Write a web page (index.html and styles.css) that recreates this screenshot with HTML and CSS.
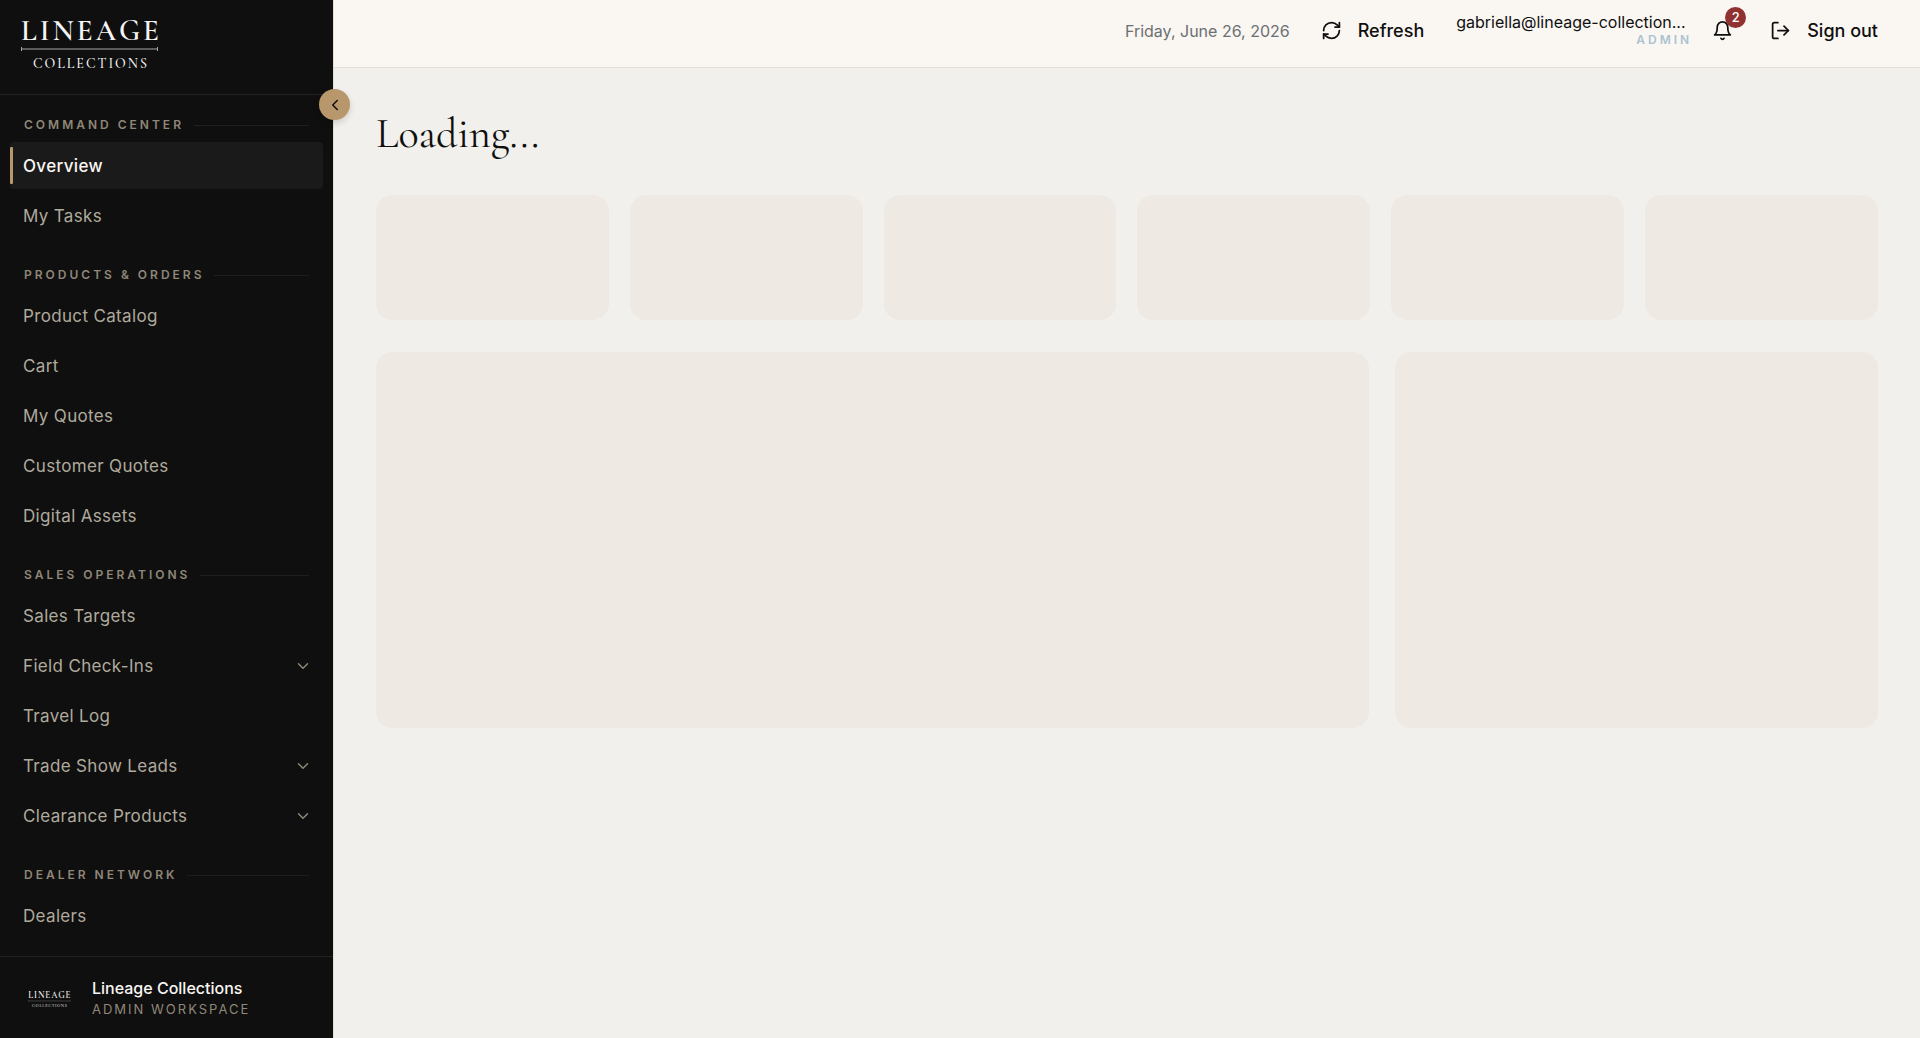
FILE: index.html
```html
<!DOCTYPE html>
<html lang="en">
<head>
    <meta charset="UTF-8">
    <meta name="viewport" content="width=device-width, initial-scale=1.0">
    <title>Lineage Collections</title>
    <link rel="stylesheet" href="styles.css">
</head>
<body>
    <div class="app">
        <aside class="sidebar">
            <div class="sidebar-header">
                <svg class="logo" viewBox="0 -12 150 68" role="img" aria-label="Lineage Collections">
                    <g id="logo">
                        <text class="logo-name" x="1" y="21">LINEAGE</text>
                        <path d="M1.5 28v4M137.5 28v4M1.5 30h136" stroke="#a8a8a8" stroke-width="1" fill="none"/>
                        <text class="logo-sub" x="13" y="49">COLLECTIONS</text>
                    </g>
                </svg>
            </div>
            <button class="collapse-button" type="button" aria-label="Collapse sidebar">
                <svg class="icon" viewBox="0 0 24 24"><path d="m15 18-6-6 6-6"/></svg>
            </button>

            <nav class="nav">
                <section class="nav-group">
                    <h2 class="nav-title">COMMAND CENTER</h2>
                    <a class="nav-item active" href="#">Overview</a>
                    <a class="nav-item" href="#">My Tasks</a>
                </section>
                <section class="nav-group">
                    <h2 class="nav-title">PRODUCTS &amp; ORDERS</h2>
                    <a class="nav-item" href="#">Product Catalog</a>
                    <a class="nav-item" href="#">Cart</a>
                    <a class="nav-item" href="#">My Quotes</a>
                    <a class="nav-item" href="#">Customer Quotes</a>
                    <a class="nav-item" href="#">Digital Assets</a>
                </section>
                <section class="nav-group">
                    <h2 class="nav-title">SALES OPERATIONS</h2>
                    <a class="nav-item" href="#">Sales Targets</a>
                    <button class="nav-item" type="button">Field Check-Ins <svg class="chevron" viewBox="0 0 24 24"><path d="m6 9 6 6 6-6"/></svg></button>
                    <a class="nav-item" href="#">Travel Log</a>
                    <button class="nav-item" type="button">Trade Show Leads <svg class="chevron" viewBox="0 0 24 24"><path d="m6 9 6 6 6-6"/></svg></button>
                    <button class="nav-item" type="button">Clearance Products <svg class="chevron" viewBox="0 0 24 24"><path d="m6 9 6 6 6-6"/></svg></button>
                </section>
                <section class="nav-group">
                    <h2 class="nav-title">DEALER NETWORK</h2>
                    <a class="nav-item" href="#">Dealers</a>
                </section>
            </nav>

            <div class="sidebar-footer">
                <svg class="logo-small" viewBox="0 -12 150 68" aria-hidden="true"><use href="#logo"/></svg>
                <div>
                    <div class="workspace-name">Lineage Collections</div>
                    <div class="workspace-role">ADMIN WORKSPACE</div>
                </div>
            </div>
        </aside>

        <div class="main">
            <header class="top-bar">
                <div class="date">Friday, June 26, 2026</div>
                <button class="top-button refresh" type="button">
                    <svg class="icon" viewBox="0 0 24 24">
                        <path d="M3 12a9 9 0 0 1 9-9 9.75 9.75 0 0 1 6.74 2.74L21 8"/>
                        <path d="M21 3v5h-5"/>
                        <path d="M21 12a9 9 0 0 1-9 9 9.75 9.75 0 0 1-6.74-2.74L3 16"/>
                        <path d="M8 16H3v5"/>
                    </svg>
                    Refresh
                </button>
                <div class="user">
                    <div class="user-email">gabriella@lineage-collection...</div>
                    <div class="user-role">ADMIN</div>
                </div>
                <button class="bell" type="button" aria-label="Notifications">
                    <svg class="icon" viewBox="0 0 24 24">
                        <path d="M6 8a6 6 0 0 1 12 0c0 7 3 9 3 9H3s3-2 3-9"/>
                        <path d="M10.3 21a1.94 1.94 0 0 0 3.4 0"/>
                    </svg>
                    <span class="badge">2</span>
                </button>
                <button class="top-button" type="button">
                    <svg class="icon" viewBox="0 0 24 24">
                        <path d="M9 21H5a2 2 0 0 1-2-2V5a2 2 0 0 1 2-2h4"/>
                        <path d="m16 17 5-5-5-5"/>
                        <path d="M21 12H9"/>
                    </svg>
                    Sign out
                </button>
            </header>

            <main class="content">
                <h1 class="page-title">Loading...</h1>
                <div class="stats">
                    <div class="skeleton"></div>
                    <div class="skeleton"></div>
                    <div class="skeleton"></div>
                    <div class="skeleton"></div>
                    <div class="skeleton"></div>
                    <div class="skeleton"></div>
                </div>
                <div class="panels">
                    <div class="skeleton wide"></div>
                    <div class="skeleton"></div>
                </div>
            </main>
        </div>
    </div>
</body>
</html>
```
FILE: styles.css
```css
* {
    box-sizing: border-box;
}

body {
    margin: 0;
    font-family: Inter, sans-serif;
    background-color: #f2f0ec;
    color: #0f0f0f;
}

button {
    padding: 0;
    border: none;
    background: none;
    color: inherit;
    font: inherit;
    cursor: pointer;
}

.icon,
.chevron {
    flex-shrink: 0;
    width: 21px;
    height: 21px;
    fill: none;
    stroke: currentColor;
    stroke-width: 2;
    stroke-linecap: round;
    stroke-linejoin: round;
}

.app {
    display: flex;
    height: 100vh;
}

/* Sidebar */
.sidebar {
    position: relative;
    display: flex;
    flex-direction: column;
    flex-shrink: 0;
    width: 334px;
    background-color: #0f0f0f;
    border-right: 1px solid #e6ddd2;
}

.sidebar-header {
    padding: 7px 20px 19px;
    border-bottom: 1px solid #222;
}

.logo {
    display: block;
    width: 150px;
    height: 68px;
    overflow: visible;
}

.logo-name,
.logo-sub {
    font-family: "Cormorant Garamond", "Liberation Serif", serif;
    font-weight: 600;
    fill: #f5f5f5;
}

.logo-name {
    font-size: 29px;
    letter-spacing: 3px;
}

.logo-sub {
    font-size: 14px;
    font-weight: 500;
    letter-spacing: 2px;
}

.collapse-button {
    position: absolute;
    top: 89px;
    right: -17px;
    display: flex;
    align-items: center;
    justify-content: center;
    width: 31px;
    height: 31px;
    border-radius: 50%;
    background-color: #b8976c;
    box-shadow: 0 3px 6px rgba(0, 0, 0, 0.15);
}

.collapse-button .icon {
    width: 18px;
    height: 18px;
}

.nav {
    flex: 1;
    min-height: 0;
    overflow: hidden;
    padding: 23px 10px 0;
}

.nav-group {
    display: flex;
    flex-direction: column;
    gap: 3px;
    margin-bottom: 29px;
}

.nav-title {
    display: flex;
    align-items: center;
    gap: 10px;
    margin: 0 14px 7px;
    font-size: 12px;
    font-weight: 600;
    line-height: 14px;
    letter-spacing: 3px;
    color: #8f8778;
}

.nav-title::after {
    content: "";
    flex: 1;
    height: 1px;
    background-color: #1f1f1f;
}

.nav-item {
    display: flex;
    align-items: center;
    justify-content: space-between;
    height: 47px;
    padding: 0 13px;
    border-radius: 4px;
    font-size: 17px;
    letter-spacing: 0.02em;
    color: #b0aa9d;
    text-decoration: none;
}

.nav-item.active {
    position: relative;
    background-color: #1a1a1a;
    color: #faf6f2;
    font-weight: 500;
}

.nav-item.active::before {
    content: "";
    position: absolute;
    top: 5px;
    bottom: 5px;
    left: 0;
    width: 3px;
    border-radius: 1px;
    background-color: #b8976c;
}

.chevron {
    width: 18px;
    height: 18px;
    margin-right: -2px;
    color: #8f8778;
}

.sidebar-footer {
    display: flex;
    align-items: center;
    gap: 18px;
    height: 82px;
    padding: 2px 28px 0;
    border-top: 1px solid #222;
}

.logo-small {
    width: 46px;
    height: 21px;
    overflow: visible;
}

.workspace-name {
    font-size: 16px;
    font-weight: 500;
    line-height: 21px;
    color: #faf6f2;
}

.workspace-role {
    font-size: 13px;
    line-height: 20px;
    letter-spacing: 2px;
    color: #8f8778;
}

/* Main area */
.main {
    flex: 1;
    min-width: 0;
}

.top-bar {
    display: flex;
    align-items: center;
    justify-content: flex-end;
    height: 68px;
    padding: 0 42px 6px;
    background-color: #faf6f2;
    border-bottom: 1px solid #e2ddd8;
}

.date {
    margin-right: 31px;
    font-size: 16px;
    color: #6b7072;
}

.top-button {
    display: flex;
    align-items: center;
    gap: 16px;
    font-size: 18px;
    font-weight: 500;
}

.refresh {
    margin-right: 32px;
}

.user {
    display: flex;
    flex-direction: column;
    align-items: flex-end;
    width: 236px;
    margin-right: 20px;
}

.user-email {
    width: 100%;
    font-size: 16px;
    line-height: 18px;
}

.user-role {
    font-size: 12px;
    font-weight: 600;
    line-height: 18px;
    letter-spacing: 3px;
    color: #a9c4d1;
}

.bell {
    position: relative;
    display: flex;
    margin-right: 37px;
}

.badge {
    position: absolute;
    top: -13px;
    right: -13px;
    width: 21px;
    height: 21px;
    border-radius: 50%;
    background-color: #903232;
    color: #fff;
    font-size: 13px;
    font-weight: 500;
    line-height: 21px;
    text-align: center;
}

.content {
    padding: 36px 42px;
}

.page-title {
    margin: 0 0 31px;
    font-family: "Cormorant Garamond", "Liberation Serif", serif;
    font-size: 42px;
    font-weight: 400;
    line-height: 60px;
}

.stats {
    display: grid;
    grid-template-columns: repeat(6, 1fr);
    gap: 21px;
    margin-bottom: 32px;
}

.panels {
    display: grid;
    grid-template-columns: repeat(3, 1fr);
    gap: 26px;
}

.skeleton {
    height: 125px;
    border-radius: 16px;
    background-color: #eee9e3;
}

.panels .skeleton {
    height: 376px;
}

.panels .wide {
    grid-column: span 2;
}
```
